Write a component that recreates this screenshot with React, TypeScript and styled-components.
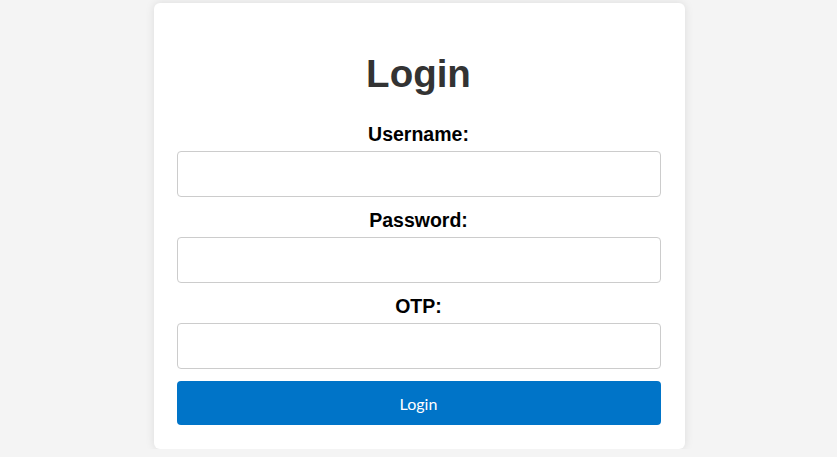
import React from "react";
import styled, { createGlobalStyle } from "styled-components";

const Global = createGlobalStyle`
  html, body { margin: 0; padding: 0; background: #f4f4f4; }
  body { font-family: "Liberation Sans", Arial, sans-serif; }
`;

const Page = styled.div`
  display: flex;
  justify-content: center;
  padding-top: 3px;
  padding-left: 1px;
`;

const Card = styled.form`
  width: 531px;
  box-sizing: border-box;
  background: #fff;
  border-radius: 6px;
  box-shadow: 0 0 10px rgba(0, 0, 0, 0.1);
  padding: 49px 24px 24px 23px;
  display: flex;
  flex-direction: column;
`;

const Title = styled.h1`
  margin: 0 0 27px;
  font-size: 38.5px;
  line-height: 44px;
  font-weight: 700;
  color: #333;
  text-align: center;
`;

const Group = styled.div`
  display: flex;
  flex-direction: column;
  margin-bottom: 12px;
`;

const Label = styled.label`
  font-size: 19.5px;
  line-height: 22px;
  font-weight: 700;
  color: #000;
  text-align: center;
  margin-bottom: 6px;
`;

const Input = styled.input`
  height: 46px;
  box-sizing: border-box;
  border: 1px solid #ccc;
  border-radius: 4px;
  padding: 0 10px;
  font-size: 16px;
  background: #fff;
`;

const Button = styled.button`
  height: 44px;
  border: none;
  border-radius: 4px;
  background: #0074c8;
  color: #fff;
  font-family: Lato, "Noto Sans", sans-serif;
  font-size: 16px;
`;

export default function App() {
  return (
    <>
      <Global />
      <Page>
        <Card onSubmit={(e) => e.preventDefault()}>
          <Title>Login</Title>
          <Group>
            <Label>Username:</Label>
            <Input type="text" />
          </Group>
          <Group>
            <Label>Password:</Label>
            <Input type="password" />
          </Group>
          <Group>
            <Label>OTP:</Label>
            <Input type="text" />
          </Group>
          <Button type="submit">Login</Button>
        </Card>
      </Page>
    </>
  );
}
